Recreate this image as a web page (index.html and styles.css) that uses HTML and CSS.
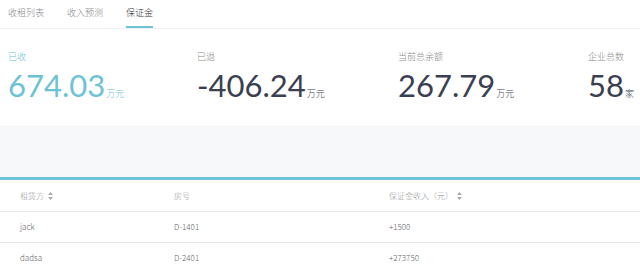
FILE: index.html
```html
<!DOCTYPE html>
<html lang="zh">
<head>
  <meta charset="UTF-8">
  <title>保证金</title>
  <link rel="stylesheet" href="styles.css">
</head>
<body>
  <div class="tabs">
    <div class="tab">收租列表</div>
    <div class="tab">收入预测</div>
    <div class="tab active">保证金</div>
  </div>
  <div class="stats">
    <div class="stat primary">
      <div class="label">已收</div>
      <div class="value">674.03<span class="unit">万元</span></div>
    </div>
    <div class="stat">
      <div class="label">已退</div>
      <div class="value">-406.24<span class="unit">万元</span></div>
    </div>
    <div class="stat">
      <div class="label">当前总余额</div>
      <div class="value">267.79<span class="unit">万元</span></div>
    </div>
    <div class="stat">
      <div class="label">企业总数</div>
      <div class="value">58<span class="unit">家</span></div>
    </div>
  </div>
  <div class="band"></div>
  <table class="list">
    <thead>
      <tr>
        <th>租赁方 <svg class="sort" width="5" height="8" viewBox="0 0 5 8"><path d="M2.5 0L5 3H0z M2.5 8L5 5H0z" fill="#aaa"/></svg></th>
        <th>房号</th>
        <th>保证金收入（元） <svg class="sort" width="5" height="8" viewBox="0 0 5 8"><path d="M2.5 0L5 3H0z M2.5 8L5 5H0z" fill="#aaa"/></svg></th>
      </tr>
    </thead>
    <tbody>
      <tr><td>jack</td><td>D-1401</td><td>+1500</td></tr>
      <tr><td>dadsa</td><td>D-2401</td><td>+273750</td></tr>
    </tbody>
  </table>
</body>
</html>
```
FILE: styles.css
```css
*{margin: 0; padding: 0; box-sizing: border-box;}
body{background: #fff; font-family: "Noto Sans CJK SC", "Noto Sans", sans-serif; color: #666; overflow: hidden;}
.tabs{display: flex; height: 29px; padding-left: 8px; gap: 23px; border-bottom: 1px solid #eef0f2;}
.tab{height: 28px; line-height: 25px; font-size: 9px; color: #888; font-weight: 300;}
.tab.active{color: #333; border-bottom: 2px solid #6cc3d6;}
.stats{display: grid; grid-template-columns: 189px 201px 190px auto; height: 97px; padding: 22px 0 0 8px;}
.stat .label{font-size: 9px; color: #888; line-height: 12px; font-weight: 300;}
.stat.primary .label{color: #6cc3d6;}
.stat .value{font-family: Lato, "Noto Sans", sans-serif; font-size: 31px; line-height: 40px; color: #3a4052; margin-top: 2px; white-space: nowrap;}
.stat.primary .value{color: #6cc3d6;}
.stat .unit{font-family: "Noto Sans CJK SC", sans-serif; font-weight: 300; font-size: 9px; margin-left: 1px;}
.band{height: 54px; background: #f7f8fa; border-top: 1px solid #f2f3f5; border-bottom: 3px solid #6cc3d6;}
.list{width: 100%; border-collapse: collapse; font-size: 8px; font-weight: 300;}
.list th{text-align: left; font-weight: 300; color: #999; height: 31px; border-bottom: 1px solid #e8e8e8;}
.list td{height: 31px; color: #666; border-bottom: 1px solid #e8e8e8;}
.list th:first-child, .list td:first-child{padding-left: 20px; width: 174px;}
.list th:nth-child(2), .list td:nth-child(2){width: 215px;}
.sort{vertical-align: -1px; margin-left: 2px;}
```
